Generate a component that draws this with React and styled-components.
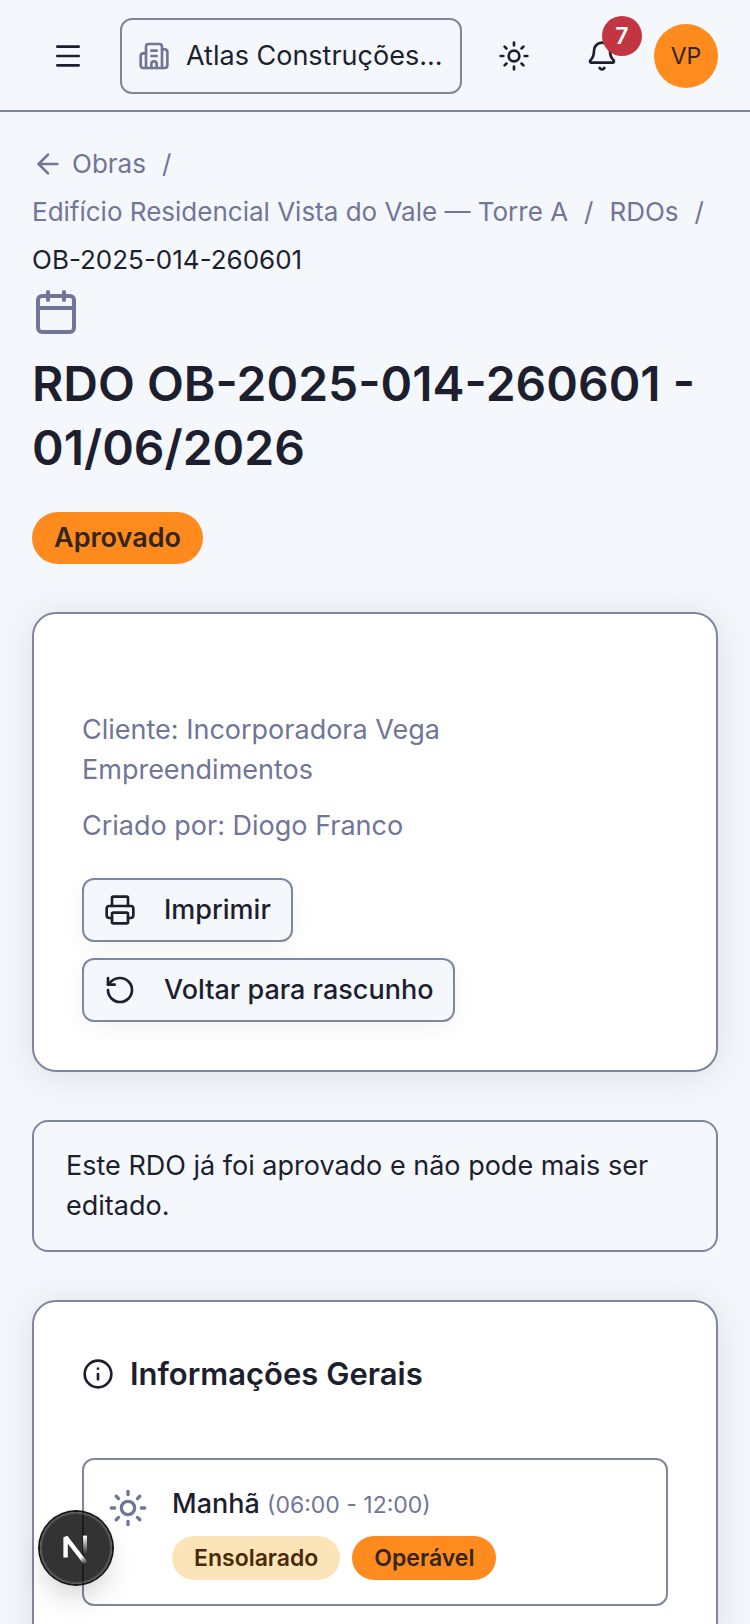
import styled, { createGlobalStyle } from "styled-components"
import {
  ArrowLeft,
  Bell,
  Building2,
  Calendar,
  Info,
  Menu,
  Printer,
  RotateCcw,
  Sun,
} from "lucide-react"

const ink = "#1d1f2f"
const muted = "#717598"
const line = "#7f879f"
const surface = "#f4f7fb"
const orange = "#ff8b1f"

const GlobalStyle = createGlobalStyle`
  *, *::before, *::after {
    box-sizing: border-box;
  }

  body {
    margin: 0;
    background-color: ${surface};
    color: ${ink};
    font-family: Inter, "Liberation Sans", sans-serif;
    font-size: 27px;
    line-height: 40px;
  }

  h1, h2, p, ol {
    margin: 0;
    padding: 0;
  }

  button {
    color: inherit;
    font: inherit;
    cursor: pointer;
  }

  a {
    color: inherit;
    text-decoration: none;
  }

  svg {
    display: block;
    flex-shrink: 0;
  }
`

const TopBar = styled.header`
  display: flex;
  align-items: center;
  gap: 16px;
  padding: 18px 32px 16px;
  border-bottom: 2px solid ${line};
`

const IconButton = styled.button`
  position: relative;
  display: flex;
  flex-shrink: 0;
  align-items: center;
  justify-content: center;
  width: 72px;
  height: 72px;
  padding: 0;
  border: 0;
  border-radius: 12px;
  background: none;
`

const CompanyButton = styled.button`
  display: flex;
  flex: 1;
  align-items: center;
  gap: 16px;
  min-width: 0;
  height: 76px;
  padding: 0 16px;
  border: 2px solid ${line};
  border-radius: 12px;
  background: none;
  text-align: left;

  svg {
    color: ${muted};
  }

  span {
    overflow: hidden;
    white-space: nowrap;
  }
`

const Counter = styled.span`
  position: absolute;
  top: -4px;
  right: -4px;
  width: 40px;
  height: 40px;
  border-radius: 50%;
  background-color: #c13640;
  color: #fff;
  font-size: 23px;
  font-weight: 600;
  text-align: center;
`

const Avatar = styled.button`
  flex-shrink: 0;
  width: 64px;
  height: 64px;
  padding: 0;
  border: 0;
  border-radius: 50%;
  background-color: ${orange};
  color: #33251c;
  font-size: 23px;
`

const Page = styled.main`
  display: flex;
  flex-direction: column;
  gap: 48px;
  padding: 32px;
`

const Heading = styled.div`
  display: flex;
  flex-direction: column;
  align-items: flex-start;
`

const Crumbs = styled.ol`
  display: flex;
  flex-wrap: wrap;
  gap: 8px 16px;
  margin-bottom: 8px;
  color: ${muted};
  font-size: 26px;
  list-style: none;
`

const Crumb = styled.li`
  color: ${(props) => (props.$current ? ink : muted)};

  a {
    display: flex;
    align-items: center;
    gap: 8px;
  }
`

const Title = styled.h1`
  margin: 16px 0 32px;
  font-size: 48px;
  font-weight: 600;
  line-height: 64px;
`

const Pill = styled.span`
  display: inline-block;
  padding: 6px 22px;
  border-radius: 26px;
  background-color: ${(props) => (props.$soft ? "#fbe5b8" : orange)};
  color: ${(props) => (props.$soft ? "#4b2a08" : "#33251c")};
  font-size: ${(props) => (props.$small ? "23px" : "27px")};
  font-weight: 600;
  line-height: ${(props) => (props.$small ? "32px" : "40px")};
`

const Card = styled.section`
  padding: 48px;
  border: 2px solid ${line};
  border-radius: 24px;
  background-color: #fff;
  box-shadow: 0 4px 40px rgba(20, 20, 24, 0.1);
`

const Summary = styled.div`
  display: flex;
  flex-direction: column;
  gap: 16px;
  padding-top: 48px;
  color: ${muted};
`

const Actions = styled.div`
  display: flex;
  flex-direction: column;
  align-items: flex-start;
  gap: 16px;
  margin-top: 32px;
`

const ActionButton = styled.button`
  display: flex;
  align-items: center;
  gap: 28px;
  height: 64px;
  padding: 0 20px;
  border: 2px solid ${line};
  border-radius: 12px;
  background-color: ${surface};
  box-shadow: 0 6px 24px rgba(20, 20, 24, 0.05);
  font-weight: 500;
`

const Notice = styled.p`
  padding: 24px 32px;
  border: 2px solid ${line};
  border-radius: 16px;
`

const CardTitle = styled.h2`
  display: flex;
  align-items: center;
  gap: 16px;
  margin-bottom: 60px;
  font-size: 31px;
  font-weight: 600;
  line-height: 48px;
`

const Shift = styled.div`
  display: flex;
  align-items: flex-start;
  gap: 24px;
  padding: 24px;
  border: 2px solid ${line};
  border-radius: 12px;

  > svg {
    margin-top: 4px;
    color: ${muted};
  }
`

const ShiftName = styled.p`
  font-weight: 500;

  span {
    color: ${muted};
    font-size: 23px;
    font-weight: 400;
    line-height: 32px;
  }
`

const Pills = styled.div`
  display: flex;
  flex-wrap: wrap;
  gap: 12px;
  margin-top: 12px;
`

// Next.js dev indicator
const DevBadge = styled.button`
  position: fixed;
  bottom: 40px;
  left: 40px;
  width: 72px;
  height: 72px;
  padding: 0;
  border: 0;
  border-radius: 50%;
  background-color: rgba(0, 0, 0, 0.8);
  box-shadow: 0 0 0 2px #171717, inset 0 0 0 2px rgba(255, 255, 255, 0.14),
    0 16px 32px -8px rgba(0, 0, 0, 0.24);
`

const NextMark = () => (
  <svg width="72" height="72" viewBox="0 0 36 36" fill="none" aria-hidden="true">
    <defs>
      <linearGradient id="diag" x1="17" y1="17" x2="23.5" y2="25.5" gradientUnits="userSpaceOnUse">
        <stop stopColor="#fff" />
        <stop offset="0.6" stopColor="#fff" />
        <stop offset="1" stopColor="#fff" stopOpacity="0" />
      </linearGradient>
      <linearGradient id="stem" x1="22" y1="12" x2="22" y2="21" gradientUnits="userSpaceOnUse">
        <stop stopColor="#fff" />
        <stop offset="1" stopColor="#fff" stopOpacity="0" />
      </linearGradient>
    </defs>
    <path
      d="M22.7 25.4L12.8 12.6V22.8"
      stroke="url(#diag)"
      strokeWidth="2.2"
      strokeLinejoin="bevel"
    />
    <path d="M22.5 11.8V21" stroke="url(#stem)" strokeWidth="2" />
  </svg>
)

const App = () => {
  return (
    <>
      <GlobalStyle />
      <TopBar>
        <IconButton aria-label="Menu">
          <Menu size={32} />
        </IconButton>
        <CompanyButton>
          <Building2 size={32} />
          <span>Atlas Construções...</span>
        </CompanyButton>
        <IconButton aria-label="Tema">
          <Sun size={32} />
        </IconButton>
        <IconButton aria-label="Notificações">
          <Bell size={32} />
          <Counter>7</Counter>
        </IconButton>
        <Avatar>VP</Avatar>
      </TopBar>

      <Page>
        <Heading>
          <Crumbs>
            <Crumb>
              <a href="#obras">
                <ArrowLeft size={32} />
                Obras
              </a>
            </Crumb>
            <Crumb>/</Crumb>
            <Crumb>
              <a href="#obra">Edifício Residencial Vista do Vale — Torre A</a>
            </Crumb>
            <Crumb>/</Crumb>
            <Crumb>
              <a href="#rdos">RDOs</a>
            </Crumb>
            <Crumb>/</Crumb>
            <Crumb $current>OB-2025-014-260601</Crumb>
          </Crumbs>
          <Calendar size={48} color={muted} />
          <Title>RDO OB-2025-014-260601 - 01/06/2026</Title>
          <Pill>Aprovado</Pill>
        </Heading>

        <Card>
          <Summary>
            <p>Cliente: Incorporadora Vega Empreendimentos</p>
            <p>Criado por: Diogo Franco</p>
          </Summary>
          <Actions>
            <ActionButton>
              <Printer size={32} />
              Imprimir
            </ActionButton>
            <ActionButton>
              <RotateCcw size={32} />
              Voltar para rascunho
            </ActionButton>
          </Actions>
        </Card>

        <Notice>Este RDO já foi aprovado e não pode mais ser editado.</Notice>

        <Card>
          <CardTitle>
            <Info size={32} />
            Informações Gerais
          </CardTitle>
          <Shift>
            <Sun size={40} />
            <div>
              <ShiftName>
                Manhã <span>(06:00 - 12:00)</span>
              </ShiftName>
              <Pills>
                <Pill $small $soft>Ensolarado</Pill>
                <Pill $small>Operável</Pill>
              </Pills>
            </div>
          </Shift>
        </Card>
      </Page>

      <DevBadge aria-label="Next.js">
        <NextMark />
      </DevBadge>
    </>
  )
}

export default App
